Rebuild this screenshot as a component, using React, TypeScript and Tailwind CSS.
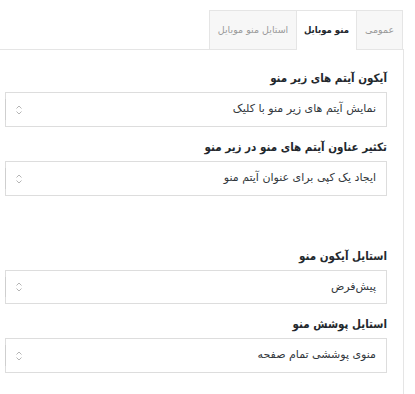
import React from "react";

function Arrows() {
  return (
    <svg width="6" height="10" viewBox="0 0 6 10" className="block">
      <path d="M0.5 3.5 L3 1 L5.5 3.5" fill="none" stroke="#b5b5b5" strokeWidth="1" />
      <path d="M0.5 6.5 L3 9 L5.5 6.5" fill="none" stroke="#b5b5b5" strokeWidth="1" />
    </svg>
  );
}

function Field({ label, value, mt, h }: { label: string; value: string; mt: string; h: string }) {
  return (
    <div className={mt}>
      <div className="text-[11.5px] font-stretch-condensed leading-[20px] font-bold text-[#23282d] mb-[4px]">{label}</div>
      <div className={`${h} border border-[#dddddd] bg-white flex items-center justify-between pr-[10px] pl-[10px] relative`}>
        <span className="text-[11px] text-[#32373c]">{value}</span>
        <Arrows />
        <div className="absolute left-[-1px] top-[6px] bottom-[6px] w-px bg-[#cfcfcf]" />
      </div>
    </div>
  );
}

export default function App() {
  return (
    <div
      dir="rtl"
      className="w-[415px] h-[394px] bg-white overflow-hidden"
      style={{ fontFamily: '"DejaVu Sans", Tahoma, sans-serif' }}
    >
      <div className="flex pt-[10px] pr-[12px] relative z-10">
        <div className="w-[47px] h-[40px] border border-[#e5e5e5] bg-[#f7f7f7] flex items-center justify-center text-[9.5px] text-[#999]">
          عمومی
        </div>
        <div className="w-[60px] h-[40px] border-t border-l border-[#e5e5e5] bg-white flex items-center justify-center text-[9.5px] text-[#23282d] font-bold font-stretch-condensed">
          منو موبایل
        </div>
        <div className="w-[87px] h-[40px] border-t border-l border-b border-[#e5e5e5] bg-[#f7f7f7] flex items-center justify-center text-[9.5px] text-[#999]">
          استایل منو موبایل
        </div>
      </div>
      <div className="mt-[-1px] mr-[11px] border-t border-r border-[#e5e5e5] h-[400px] pr-[16px] pl-[5px] pt-[18px]">
        <Field mt="" h="h-[35px]" label="آیکون آیتم های زیر منو" value="نمایش آیتم های زیر منو با کلیک" />
        <Field mt="mt-[10px]" h="h-[35px]" label="تکثیر عناون آیتم های منو در زیر منو" value="ایجاد یک کپی برای عنوان آیتم منو" />
        <Field mt="mt-[50px]" h="h-[34px]" label="استایل آیکون منو" value="پیش‌فرض" />
        <Field mt="mt-[10px]" h="h-[35px]" label="استایل پوشش منو" value="منوی پوششی تمام صفحه" />
      </div>
    </div>
  );
}
